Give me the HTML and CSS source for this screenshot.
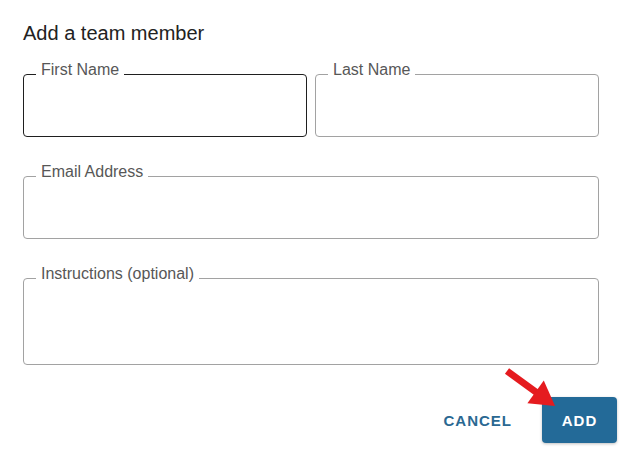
FILE: index.html
```html
<!DOCTYPE html>
<html>
<head>
<meta charset="utf-8">
<link rel="stylesheet" href="styles.css">
</head>
<body>
<div class="dialog">
  <h2 class="title">Add a team member</h2>
  <div class="row">
    <div class="field focused"><span class="label">First Name</span></div>
    <div class="field"><span class="label">Last Name</span></div>
  </div>
  <div class="field"><span class="label">Email Address</span></div>
  <div class="field tall"><span class="label">Instructions (optional)</span></div>
  <div class="actions">
    <button class="btn text">CANCEL</button>
    <button class="btn primary">ADD</button>
    <svg class="arrow" width="60" height="50" viewBox="0 0 60 50">
      <line x1="7" y1="6" x2="40" y2="30" stroke="#e51b1f" stroke-width="7"/>
      <polygon points="55,41 27.4,38.2 43.8,15.6" fill="#e51b1f"/>
    </svg>
  </div>
</div>
</body>
</html>
```

FILE: styles.css
```css
* { box-sizing: border-box; }
html, body { margin: 0; padding: 0; background: #fff; }
body {
  width: 622px;
  height: 454px;
  font-family: "Liberation Sans", Arial, sans-serif;
  overflow: hidden;
}
.dialog {
  padding: 22px 23px 0 23px;
  display: flex;
  flex-direction: column;
}
.title {
  margin: 0 0 29px 0;
  font-size: 20px;
  line-height: 23px;
  font-weight: normal;
  color: #222;
}
.row {
  display: flex;
  gap: 8px;
  margin-bottom: 39px;
}
.row .field { flex: 1; margin-bottom: 0; }
.field {
  position: relative;
  height: 63px;
  border: 1px solid #a2a2a2;
  border-radius: 4px;
  margin-bottom: 39px;
}
.field.focused { border-color: #1f1f1f; }
.field.tall { height: 87px; margin-bottom: 32px; }
.label {
  position: absolute;
  top: -14px;
  left: 12px;
  padding: 0 5px;
  background: #fff;
  font-size: 16px;
  line-height: 18px;
  color: #575757;
  white-space: nowrap;
}
.actions {
  position: relative;
  display: flex;
  justify-content: flex-end;
  align-items: center;
  gap: 10px;
  margin-right: -18px;
}
.btn {
  font-family: "Liberation Sans", Arial, sans-serif;
  font-weight: bold;
  font-size: 15px;
  letter-spacing: 1px;
  border: none;
  border-radius: 4px;
  height: 46px;
  cursor: pointer;
}
.btn.text {
  background: transparent;
  color: #2a6892;
  padding: 0 20px;
}
.btn.primary {
  background: #236a98;
  color: #fff;
  width: 75px;
  padding: 0;
  box-shadow: 0 1px 3px rgba(0,0,0,0.25);
}
.arrow {
  position: absolute;
  left: 477px;
  top: -32px;
}
```
